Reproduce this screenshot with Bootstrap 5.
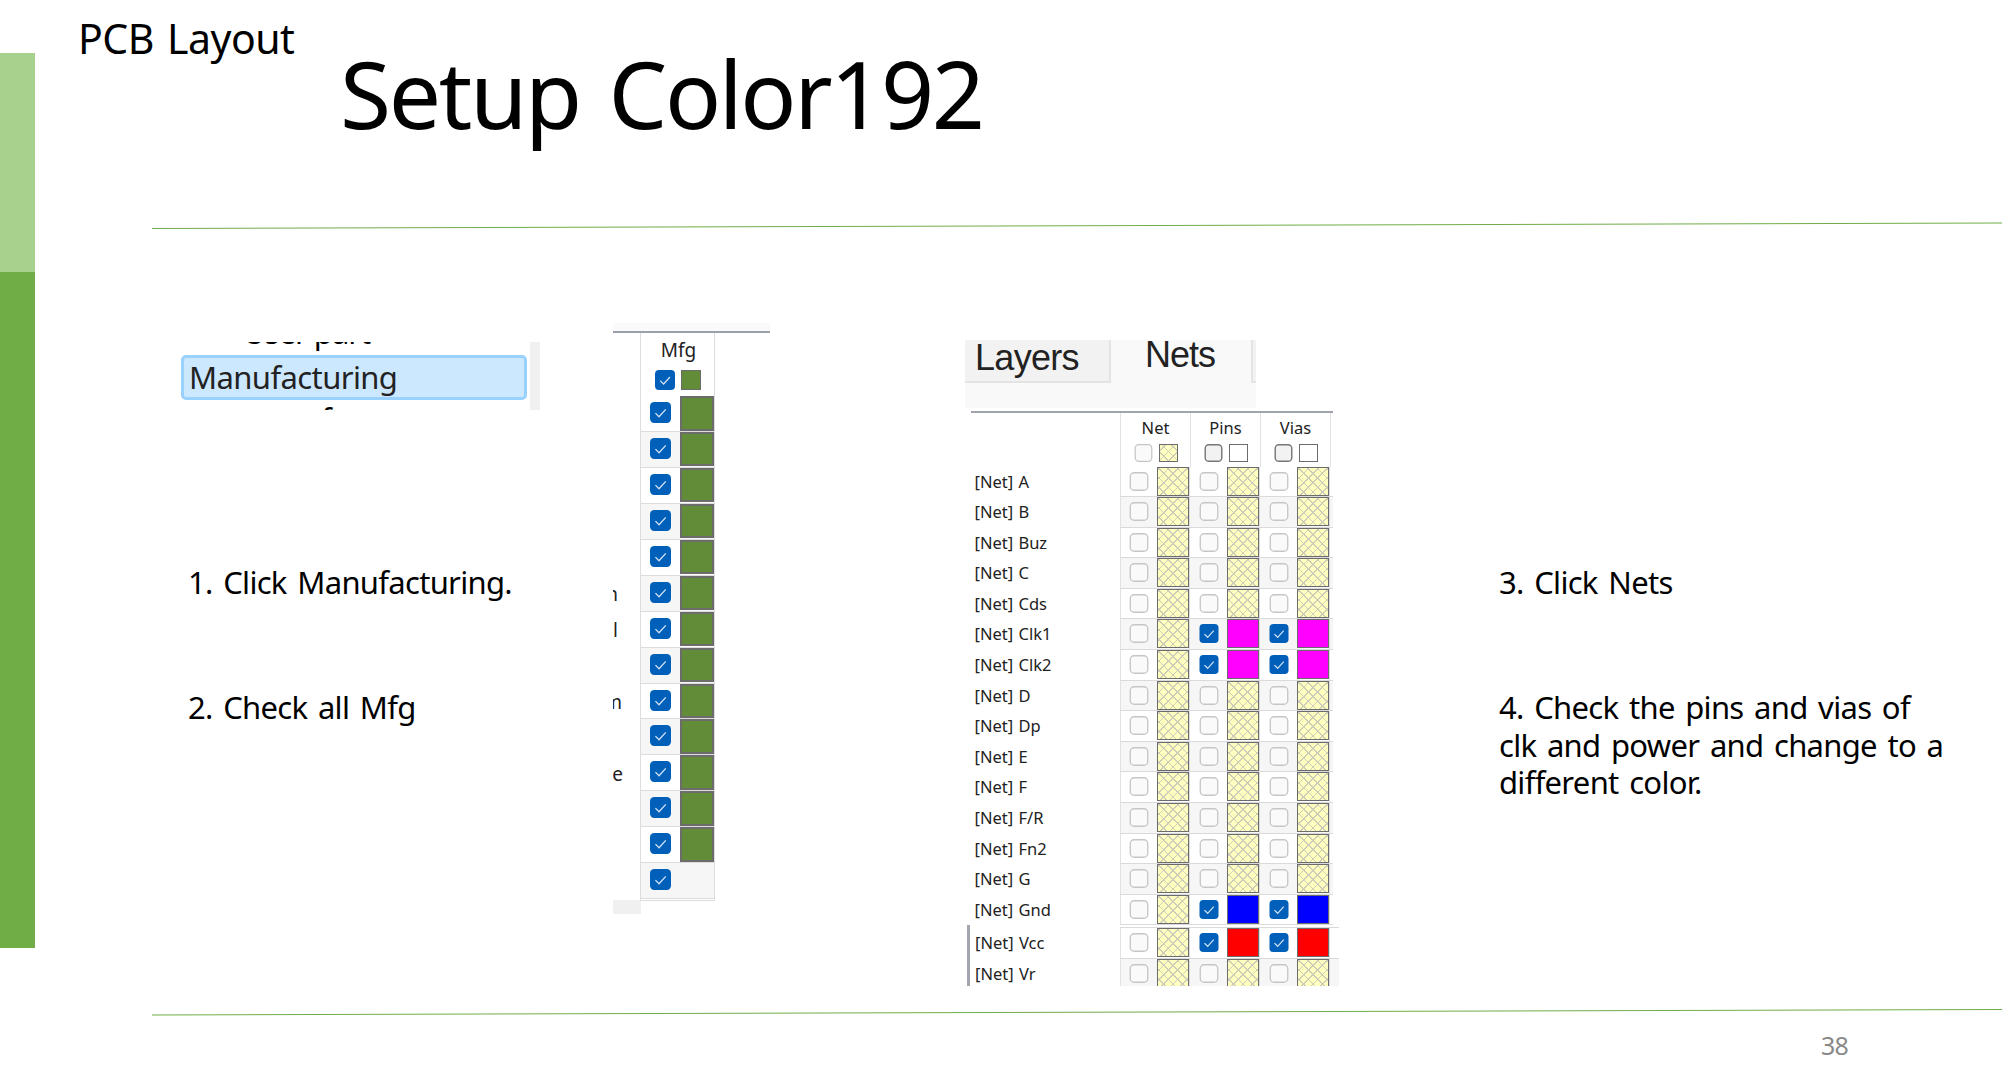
<!DOCTYPE html>
<html lang="en">
<head>
    <meta charset="UTF-8">
    <meta name="viewport" content="width=device-width, initial-scale=1.0">
    <title>Setup Color192</title>
    <link href="https://cdn.jsdelivr.net/npm/bootstrap@5.3.3/dist/css/bootstrap.min.css" rel="stylesheet">
    <script src="https://cdn.jsdelivr.net/npm/bootstrap@5.3.3/dist/js/bootstrap.bundle.min.js"></script>
    <style>
        body {
            font-family: "Noto Sans", "Open Sans", sans-serif;
            color: #000;
            background-color: #fff;
        }
        .slide {
            width: 2002px;
            height: 1075px;
        }
        .side-bar {
            width: 35px;
            padding-top: 53px;
        }
        .side-light { height: 219px; background: #a9d18e; }
        .side-dark { height: 676px; background: #70ad47; }

        .slide-head { height: 220px; }
        .chapter {
            font-size: 41px;
            line-height: 50px;
            margin: 13px 0 0 43px;
            width: 262px;
            letter-spacing: -.5px;
            word-spacing: 3px;
        }
        .slide-title {
            font-size: 93px;
            line-height: 100px;
            margin: 43px 0 0;
            font-weight: 400;
            letter-spacing: -2.4px;
            word-spacing: 7px;
        }
        .rule {
            height: 12px;
            width: 1850px;
            margin-left: 117px;
        }
        .slide-body { height: 774px; padding-left: 145px; }
        .col-tree { width: 433px; padding-top: 110px; }
        .col-mfg { width: 352px; padding-top: 91px; }
        .col-nets { width: 534px; padding-top: 108px; }
        .col-notes { width: 460px; padding-top: 332px; }
        .page-no {
            font-size: 25px;
            line-height: 30px;
            color: #898989;
            padding: 12px 0 0 1786px;
            letter-spacing: -.8px;
        }

        /* step texts */
        .step {
            font-size: 31px;
            line-height: 37.5px;
            margin: 0;
            letter-spacing: -.7px;
            word-spacing: 3.2px;
        }
        .col-tree .step { padding-left: 8px; }
        .step + .step { margin-top: 87.5px; }

        /* tree list */
        .tree { width: 360px; height: 68px; margin-bottom: 154px; }
        .tree-list { width: 350px; font-size: 31px; line-height: 40px; }
        .tree-prev { height: 13px; padding-left: 63px; }
        .tree-prev span { margin-top: -30px; letter-spacing: -1px; }
        .tree-active {
            height: 45px;
            margin-left: 1px;
            padding-left: 5px;
            width: 346px;
            border: 3px solid #99d1ff;
            border-radius: 5px;
            background: #cce8ff;
            line-height: 38px;
            letter-spacing: -.6px;
            color: #222;
        }
        .tree-next { height: 10px; padding-left: 141px; line-height: 38px; }
        .tree-scroll { width: 10px; background: #f0f0f0; }

        /* check boxes and swatches */
        .tick { display: block; flex: none; }
        .swatch { flex: none; border: 1.5px solid #6c6c6c; }
        .hatch {
            background:
                repeating-linear-gradient(45deg, transparent 0 5.5px, #cdcdb8 5.5px 6.6px),
                repeating-linear-gradient(-45deg, transparent 0 5.5px, #cdcdb8 5.5px 6.6px),
                #ffffc0;
        }
        .magenta { background: #f0f; }
        .blue { background: #00f; }
        .red { background: #f00; }
        .green { background: #638c38; }

        /* Mfg column */
        .mfg-top { width: 157px; height: 10px; background: #fafafa; border-bottom: 2px solid #9a9fa9; }
        .mfg-side { width: 27px; }
        .mfg-side .gap-top { height: 63.5px; }
        .mfg-label {
            height: 35.95px;
            font-size: 19px;
            line-height: 37px;
            overflow: hidden;
            color: #222;
        }
        .mfg-foot { width: 28px; height: 14px; background: #f0f0f0; }
        .mfg-grid { width: 75px; border: 1px solid #ddd; border-top: 0; height: 567.5px; }
        .mfg-name { font-size: 19px; line-height: 24px; height: 37px; padding: 5px 0 0 2px; color: #222; }
        .mfg-all { height: 26px; gap: 6px; padding-left: 14px; }
        .mfg-all .swatch { width: 20px; height: 20px; }
        .mfg-row { height: 35.95px; border-bottom: 1.5px solid #dcdcdc; }
        .mfg-row:nth-child(even) { background: #f6f6f6; }
        .mfg-row .tick { margin: 6px 9px 0; }
        .mfg-row .swatch { width: 34px; height: 34.5px; border-width: 2px; }

        /* Nets */
        .net-tabs {
            width: 291px;
            height: 68px;
            background: #f9f9f9;
            font-family: "Liberation Sans", Arial, sans-serif;
            font-size: 36px;
            line-height: 40px;
            color: #222;
        }
        .tab-layers { width: 146px; height: 43px; background: #f2f2f2; border: solid #e4e4e4; border-width: 0 2px 2px 0; padding-left: 10px; line-height: 36px; letter-spacing: -.7px; }
        .tab-nets { width: 140px; padding-left: 34px; margin-top: -5px; letter-spacing: -1px; }
        .tab-more { width: 5px; height: 43px; background: #f2f2f2; border: solid #e4e4e4; border-width: 0 0 2px 2px; }
        .net-sheet { width: 362px; margin: 3px 0 0 6px; border-top: 2px solid #a0a5ad; }
        .net-extra { width: 374px; height: 60.5px; overflow: hidden; padding-left: 2px; margin-top: 0; }
        .net-extra > div { border-left: 3px solid #a3a6ae; }
        .net-head { height: 53.5px; padding-left: 149px; }
        .net-col { width: 70px; border-left: 1px solid #e2e2e2; font-size: 16.5px; line-height: 22px; color: #222; }
        .net-col .name { padding-top: 4px; height: 31px; }
        .net-all { gap: 6px; padding-left: 13px; }
        .net-all .swatch { width: 19px; height: 18px; }
        .net-row { height: 30.6px; }
        .net-label { width: 149px; padding-left: 3.5px; font-size: 16.5px; line-height: 30px; word-spacing: 1px; color: #222; white-space: nowrap; }
        .net-extra .net-label { width: 150px; padding-left: 5px; }
        .net-cells { border-bottom: 1.5px solid #dadada; border-left: 1px solid #e2e2e2; flex: 1; }
        .net-row.shade .net-cells { background: #f6f6f6; }
        .net-cell { width: 69.9px; }
        .net-cell .tick { margin: 5px 8px 0; }
        .net-cell .swatch { width: 32px; height: 29px; border-width: 1.5px; }
        .net-cell .slot { border-right: 1px solid #ddd; }
        .net-extra .net-cap { height: 2.5px; margin-left: 150px; border-bottom: 1.5px solid #dadada; }
    </style>
</head>
<body>
    <svg width="0" height="0" class="d-none">
        <symbol id="tick-on" viewBox="0 0 20 20">
            <rect x="0" y="0" width="20" height="20" rx="4" fill="#005fb8"/>
            <path d="M5.2 10.6 8.6 14 15 7" fill="none" stroke="#cfe2f4" stroke-width="1.3"/>
        </symbol>
        <symbol id="tick-off" viewBox="0 0 20 20">
            <rect x=".8" y=".8" width="18.4" height="18.4" rx="4" fill="#fafafa" stroke="#c6c6c6" stroke-width="1.4"/>
        </symbol>
        <symbol id="tick-dark" viewBox="0 0 20 20">
            <rect x=".8" y=".8" width="18.4" height="18.4" rx="4" fill="#f2f2f2" stroke="#777" stroke-width="1.6"/>
        </symbol>
    </svg>

    <div class="slide d-flex overflow-hidden">
        <aside class="side-bar flex-shrink-0">
            <div class="side-light"></div>
            <div class="side-dark"></div>
        </aside>
        <main class="flex-grow-1">
            <header class="slide-head d-flex align-items-start">
                <div class="chapter text-nowrap">PCB Layout</div>
                <h1 class="slide-title text-nowrap">Setup Color192</h1>
            </header>
            <svg class="rule d-block" viewBox="0 0 1850 12"><path d="M0 8.5 1850 3" stroke="#70ad47" stroke-width="1"/></svg>

            <section class="slide-body d-flex">
                <div class="col-tree flex-shrink-0">
                    <div class="tree d-flex overflow-hidden">
                        <div class="tree-list">
                            <div class="tree-prev d-flex"><span>User part</span></div>
                            <div class="tree-active">Manufacturing</div>
                            <div class="tree-next">f</div>
                        </div>
                        <div class="tree-scroll"></div>
                    </div>
                    <p class="step">1. Click Manufacturing.</p>
                    <p class="step">2. Check all Mfg</p>
                </div>

                <div class="col-mfg flex-shrink-0">
                    <div class="mfg-top"></div>
                    <div class="d-flex">
                        <div class="mfg-side">
                            <div class="gap-top"></div>
                            <div id="mfg-labels"></div>
                            <div class="mfg-foot"></div>
                        </div>
                        <div class="mfg-grid">
                            <div class="mfg-name text-center">Mfg</div>
                            <div class="mfg-all d-flex">
                                <svg class="tick" width="20" height="20"><use href="#tick-on"/></svg>
                                <div class="swatch green"></div>
                            </div>
                            <div id="mfg-rows"></div>
                        </div>
                    </div>
                </div>

                <div class="col-nets flex-shrink-0">
                    <div class="net-tabs d-flex overflow-hidden">
                        <div class="tab-layers">Layers</div>
                        <div class="tab-nets">Nets</div>
                        <div class="tab-more"></div>
                    </div>
                    <div class="net-sheet">
                        <div class="net-head d-flex" id="net-head"></div>
                        <div id="net-rows"></div>
                    </div>
                    <div class="net-extra">
                        <div>
                            <div class="net-cap"></div>
                            <div id="net-rows-extra"></div>
                        </div>
                    </div>
                </div>

                <div class="col-notes flex-shrink-0">
                    <p class="step">3. Click Nets</p>
                    <p class="step text-nowrap">4. Check the pins and vias of<br>clk and power and change to a<br>different color.</p>
                </div>
            </section>

            <svg class="rule d-block" viewBox="0 0 1850 12"><path d="M0 9 1850 3.5" stroke="#70ad47" stroke-width="1"/></svg>
            <footer class="page-no">38</footer>
        </main>
    </div>

    <script>
        const mfgLabels = ['', '', '', '', '', 'on', 'al', '', 'om', '', 'ne', '', '', ''];
        const labelWidths = { on: 5, al: 5, om: 9, ne: 10 };
        const nets = ['A', 'B', 'Buz', 'C', 'Cds', 'Clk1', 'Clk2', 'D', 'Dp', 'E', 'F', 'F/R', 'Fn2', 'G', 'Gnd'];
        const netsExtra = ['Vcc', 'Vr'];
        const netColors = { Clk1: 'magenta', Clk2: 'magenta', Gnd: 'blue', Vcc: 'red' };

        function tick(state, w, h) {
            return `<svg class="tick" width="${w}" height="${h}"><use href="#tick-${state}"/></svg>`;
        }

        function netCell(color) {
            return `
                <div class="net-cell d-flex">
                    ${tick(color ? 'on' : 'off', 20, 19)}
                    <div class="slot"><div class="swatch ${color || 'hatch'}"></div></div>
                </div>`;
        }

        function netRow(name, i) {
            const color = netColors[name];
            return `
                <div class="net-row d-flex ${i % 2 ? 'shade' : ''}">
                    <div class="net-label">[Net] ${name}</div>
                    <div class="net-cells d-flex">${netCell()}${netCell(color)}${netCell(color)}</div>
                </div>`;
        }

        document.getElementById('mfg-labels').innerHTML = mfgLabels.map(t =>
            `<div class="mfg-label d-flex justify-content-end" style="width:${labelWidths[t] || 0}px">${t}</div>`).join('');

        document.getElementById('mfg-rows').innerHTML = mfgLabels.map((t, i) => `
            <div class="mfg-row d-flex">
                ${tick('on', 21, 21)}
                ${i < 13 ? '<div class="swatch green"></div>' : ''}
            </div>`).join('');

        document.getElementById('net-head').innerHTML = ['Net', 'Pins', 'Vias', ''].map((t, i) => `
            <div class="net-col ${i === 3 ? 'w-auto' : ''}">
                <div class="name text-center">${t}</div>
                ${t ? `<div class="net-all d-flex">${tick(i ? 'dark' : 'off', 19, 18)}<div class="swatch ${i ? '' : 'hatch'}"></div></div>` : ''}
            </div>`).join('');

        document.getElementById('net-rows').innerHTML = nets.map(netRow).join('');
        document.getElementById('net-rows-extra').innerHTML = netsExtra.map(netRow).join('');
    </script>
</body>
</html>
